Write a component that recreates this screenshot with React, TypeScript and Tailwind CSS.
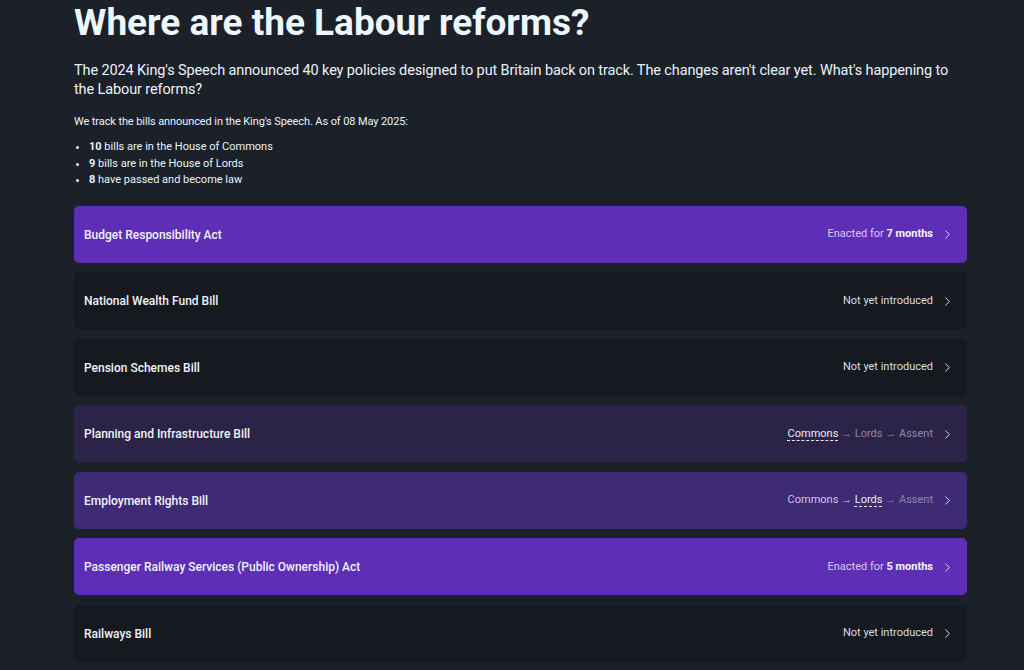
import { ChevronRight } from 'lucide-react';
import { ReactNode } from 'react';

type Stage = 'enacted' | 'none' | 'commons' | 'lords';

interface Bill {
  readonly name: string;
  readonly stage: Stage;
  readonly months?: number;
}

const bills: Bill[] = [
  { name: 'Budget Responsibility Act', stage: 'enacted', months: 7 },
  { name: 'National Wealth Fund Bill', stage: 'none' },
  { name: 'Pension Schemes Bill', stage: 'none' },
  { name: 'Planning and Infrastructure Bill', stage: 'commons' },
  { name: 'Employment Rights Bill', stage: 'lords' },
  { name: 'Passenger Railway Services (Public Ownership) Act', stage: 'enacted', months: 5 },
  { name: 'Railways Bill', stage: 'none' },
];

const cardBg: Record<Stage, string> = {
  enacted: 'bg-[#5f2eb6]',
  none: 'bg-[#161920]',
  commons: 'bg-[#2c2348]',
  lords: 'bg-[#3f2a76]',
};

function Current({ children }: { children: ReactNode }) {
  return (
    <span className="text-[#e6f0f8] underline decoration-dashed decoration-1 underline-offset-[3px]">
      {children}
    </span>
  );
}

function Status({ bill }: { bill: Bill }) {
  if (bill.stage === 'enacted') {
    return (
      <span className="text-[#d8c8f0]">
        Enacted for <b className="font-bold text-[#f2f6fb]">{bill.months} months</b>
      </span>
    );
  }
  if (bill.stage === 'none') {
    return <span className="text-[#d6dde5]">Not yet introduced</span>;
  }
  if (bill.stage === 'commons') {
    return (
      <span className="text-[#8e88a8]">
        <Current>Commons</Current> → Lords → Assent
      </span>
    );
  }
  return (
    <span className="text-[#8e84ae]">
      <span className="text-[#cfc8e4]">Commons →</span> <Current>Lords</Current> → Assent
    </span>
  );
}

export default function App() {
  return (
    <div
      className="min-h-screen bg-[#1c2029] text-[#e8f3fb]"
      style={{ fontFamily: 'Roboto, "Noto Sans", sans-serif' }}
    >
      <div className="ml-[74px] w-[893px]">
        <h1 className="text-[37px] font-bold leading-[46px] text-[#ecf7ff]">Where are the Labour reforms?</h1>
        <p className="mt-[15px] text-[14.5px] leading-[19px] tracking-[-0.12px]">
          The 2024 King's Speech announced 40 key policies designed to put Britain back on track. The changes aren't
          clear yet. What's happening to the Labour reforms?
        </p>
        <p className="mt-[15px] text-[11px] leading-[16px] tracking-[-0.1px]">
          We track the bills announced in the King's Speech. As of 08 May 2025:
        </p>
        <ul className="mt-[9px] list-disc pl-[15px] text-[11px] leading-[16.5px]">
          <li>
            <b>10</b> bills are in the House of Commons
          </li>
          <li>
            <b>9</b> bills are in the House of Lords
          </li>
          <li>
            <b>8</b> have passed and become law
          </li>
        </ul>

        <div className="mt-[17px] flex flex-col gap-[9.5px]">
          {bills.map((bill) => (
            <div
              key={bill.name}
              className={`flex h-[57px] items-center justify-between rounded-[5px] pl-[10px] pr-[12px] ${cardBg[bill.stage]}`}
            >
              <span className="pt-px text-[12px] font-medium text-[#eef4fa]">{bill.name}</span>
              <span className="flex items-center gap-[7px] pt-px text-[11px]">
                <Status bill={bill} />
                <ChevronRight size={15} strokeWidth={1.5} className="text-[#e0e4ec]" />
              </span>
            </div>
          ))}
        </div>
      </div>
    </div>
  );
}
